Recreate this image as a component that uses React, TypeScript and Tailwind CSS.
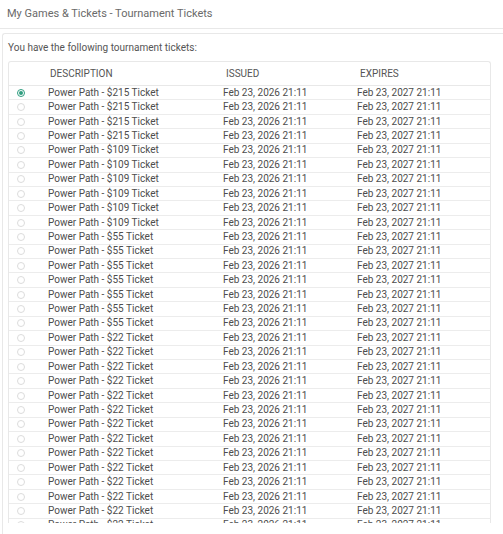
const rows: string[] = [
  ...Array(4).fill("$215"),
  ...Array(6).fill("$109"),
  ...Array(7).fill("$55"),
  ...Array(14).fill("$22"),
];

export default function App() {
  return (
    <div className="w-[503px] h-[534px] overflow-hidden bg-white font-['Roboto',sans-serif] text-[#4d4d4d]">
      {/* header */}
      <div className="h-[29px] border-b border-[#e8e8e8] pl-[7px] flex items-center text-[11px] text-[#6a6a6a]">
        My Games &amp; Tickets - Tournament Tickets
      </div>

      {/* panel */}
      <div className="mt-[4px] ml-[2px] border-l border-t border-[#e8e8e8] rounded-tl-[3px] pl-[5px] h-[501px]">
        <div className="h-[27px] flex items-center text-[10px] text-[#555]">
          You have the following tournament tickets:
        </div>

        <div className="w-[483px] h-[462px] overflow-hidden border border-b-0 border-[#e8e8e8] rounded-t-[3px]">
          <div className="grid grid-cols-[39px_175px_134px_1fr] h-[24px] items-center border-b border-[#e8e8e8] text-[10px] text-[#555]">
            <div />
            <div className="pl-[2px]">DESCRIPTION</div>
            <div className="pl-[3px]">ISSUED</div>
            <div className="pl-[3px]">EXPIRES</div>
          </div>
          {rows.map((price, i) => (
            <div
              key={i}
              className="grid grid-cols-[39px_175px_134px_1fr] h-[14.43px] items-center border-b border-[#ececec] text-[10px] leading-none"
            >
              <div className="pl-[8px] flex items-center">
                {i === 0 ? (
                  <span className="w-[8px] h-[8px] rounded-full border border-[#2f9e80] flex items-center justify-center">
                    <span className="w-[4px] h-[4px] rounded-full bg-[#2f9e80]" />
                  </span>
                ) : (
                  <span className="w-[8px] h-[8px] rounded-full border border-[#dcdcdc]" />
                )}
              </div>
              <div>Power Path - {price} Ticket</div>
              <div>Feb 23, 2026 21:11</div>
              <div>Feb 23, 2027 21:11</div>
            </div>
          ))}
        </div>
      </div>
    </div>
  );
}
